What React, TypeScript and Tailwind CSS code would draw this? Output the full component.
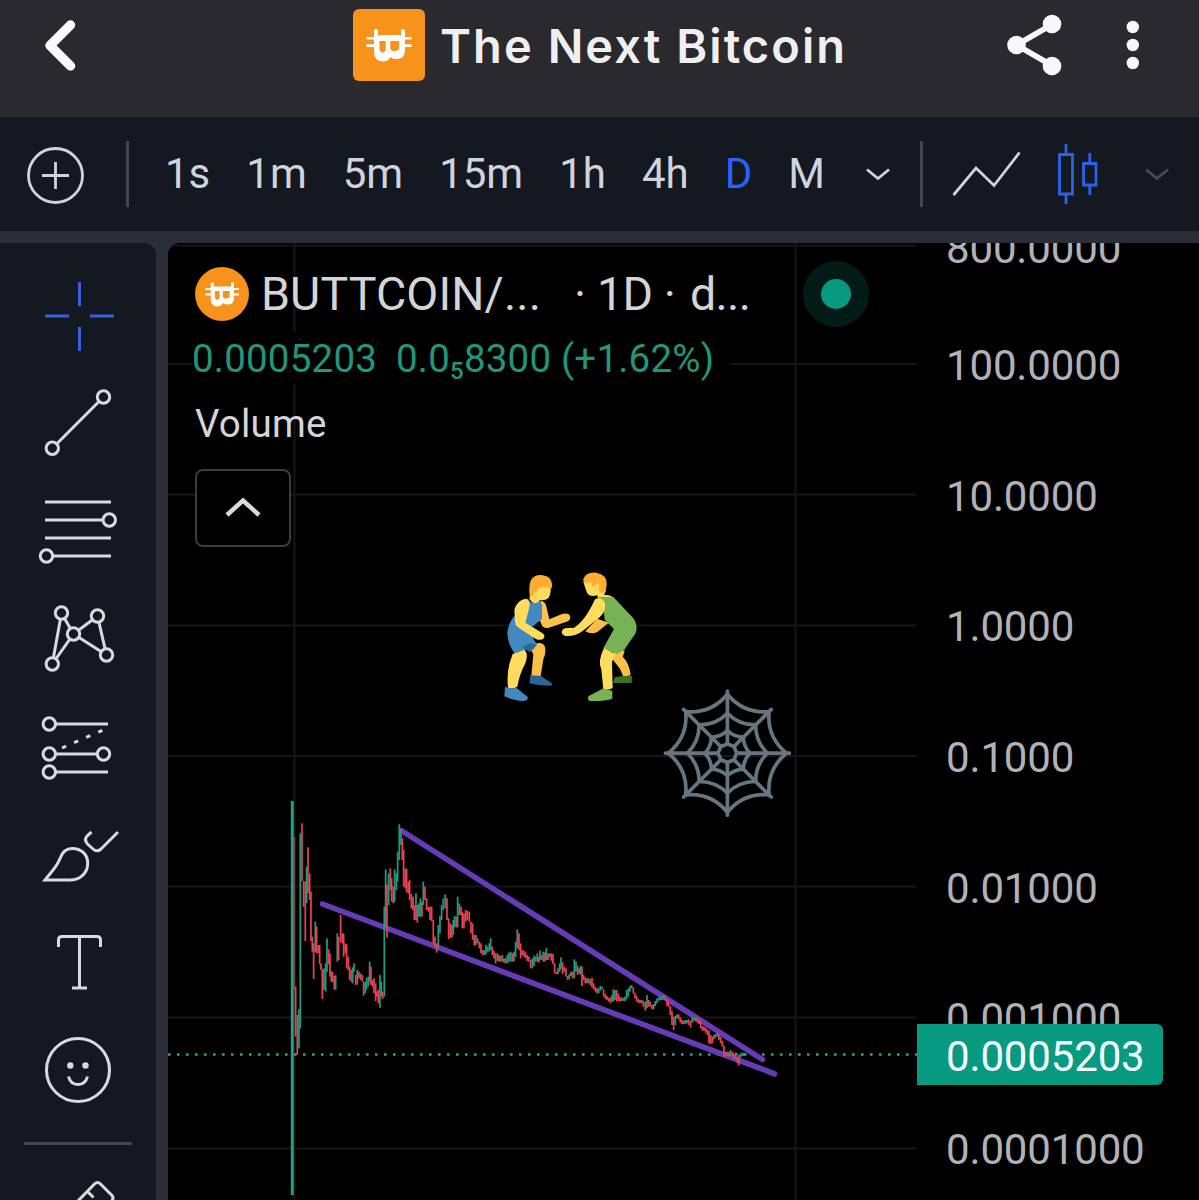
import type { ReactNode } from "react";

const INTERVALS = ["1s", "1m", "5m", "15m", "1h", "4h", "D", "M"];

const AXIS_LABELS = ["100.0000", "10.0000", "1.0000", "0.1000", "0.01000", "0.001000", "0.0001000"];

const GRID_Y = [245.5, 364, 494.5, 625.5, 756, 886.5, 1017.5, 1148.5];
const GRID_X = [294.5, 795.5];

// [x, high, low], in thirds of a pixel
const CANDLES: [number, number, number][] = [
	[77, 590, 740], [82, 675, 795], [87, 657, 775], [91, 130, 715], [96, 100, 273], [101, 273, 350],
	[106, 275, 453], [110, 230, 340], [114, 172, 310], [119, 250, 330], [123, 305, 453], [127, 440, 485],
	[131, 460, 567], [136, 395, 487], [140, 410, 490], [145, 465, 490], [149, 465, 523], [153, 520, 540],
	[157, 538, 627], [162, 535, 600], [167, 520, 605], [171, 445, 545], [176, 478, 523], [180, 490, 560],
	[184, 543, 575], [188, 547, 577], [193, 558, 598], [197, 555, 600], [202, 430, 515], [206, 440, 510],
	[212, 375, 457], [217, 430, 460], [221, 430, 500], [226, 460, 490], [230, 463, 535], [235, 500, 540],
	[239, 530, 570], [244, 540, 575], [248, 532, 580], [252, 520, 545], [257, 555, 585], [262, 540, 583],
	[267, 545, 565], [272, 550, 570], [277, 555, 575], [281, 575, 617], [286, 575, 610], [290, 563, 598],
	[295, 560, 590], [299, 515, 575], [303, 530, 585], [308, 570, 590], [312, 565, 610], [317, 580, 633],
	[321, 605, 620], [325, 600, 640], [330, 555, 653], [334, 575, 620], [338, 605, 627], [343, 350, 620],
	[347, 238, 415], [351, 283, 443], [356, 250, 345], [361, 235, 300], [365, 265, 335], [370, 290, 340],
	[374, 238, 335], [379, 250, 300], [383, 185, 275], [388, 103, 210], [393, 115, 165], [397, 145, 210],
	[401, 180, 290], [406, 235, 295], [410, 237, 307], [415, 275, 310], [419, 270, 330], [424, 312, 355],
	[429, 320, 360], [433, 345, 390], [438, 310, 390], [442, 345, 398], [447, 340, 380], [451, 325, 380],
	[456, 335, 380], [460, 275, 345], [465, 290, 330], [470, 325, 360], [475, 350, 365], [480, 350, 390],
	[485, 350, 393], [490, 390, 460], [495, 440, 470], [500, 460, 488], [505, 405, 475], [510, 378, 430],
	[515, 345, 390], [520, 325, 360], [526, 313, 355], [531, 325, 390], [536, 385, 447], [541, 400, 443],
	[546, 405, 443], [550, 390, 435], [554, 378, 412], [559, 380, 412], [563, 320, 412], [568, 340, 375],
	[573, 350, 375], [577, 365, 415], [582, 370, 415], [587, 360, 395], [592, 362, 390], [598, 365, 395],
	[603, 395, 430], [608, 400, 450], [613, 435, 467], [618, 435, 465], [623, 445, 460], [628, 455, 475],
	[633, 460, 490], [638, 480, 495], [643, 480, 495], [648, 465, 493], [653, 470, 485], [658, 460, 485],
	[662, 445, 480], [667, 470, 495], [672, 483, 505], [677, 490, 520], [682, 490, 513], [687, 495, 515],
	[692, 498, 515], [697, 495, 515], [702, 505, 518], [707, 505, 520], [712, 495, 520], [717, 488, 515],
	[722, 485, 515], [727, 490, 515], [732, 485, 515], [737, 455, 500], [742, 418, 475], [747, 430, 480],
	[752, 460, 505], [757, 480, 495], [762, 483, 500], [767, 487, 505], [772, 495, 513], [777, 500, 515],
	[782, 510, 535], [787, 505, 535], [792, 497, 528], [797, 500, 515], [802, 490, 515], [807, 500, 518],
	[810, 482, 510], [815, 495, 510], [820, 485, 515], [825, 487, 515], [829, 473, 510], [834, 490, 510],
	[839, 490, 502], [844, 490, 512], [849, 492, 522], [854, 520, 550], [859, 545, 553], [864, 535, 552],
	[869, 520, 545], [873, 502, 538], [878, 517, 552], [883, 530, 545], [888, 535, 560], [893, 558, 570],
	[898, 552, 568], [903, 545, 558], [908, 545, 565], [913, 508, 565], [918, 515, 545], [923, 527, 555],
	[928, 535, 550], [932, 527, 555], [936, 530, 588], [941, 555, 570], [946, 562, 580], [951, 565, 580],
	[956, 565, 580], [961, 568, 585], [966, 563, 592], [971, 580, 598], [976, 590, 605], [981, 595, 610],
	[986, 595, 610], [991, 588, 602], [996, 590, 598], [1001, 598, 620], [1006, 612, 627], [1011, 618, 630],
	[1016, 623, 635], [1021, 623, 640], [1026, 615, 635], [1030, 598, 635], [1035, 600, 630], [1040, 600, 635],
	[1045, 610, 633], [1050, 620, 635], [1055, 623, 633], [1060, 623, 633], [1065, 620, 633], [1070, 600, 628],
	[1075, 595, 620], [1080, 588, 605], [1085, 585, 595], [1090, 592, 610], [1095, 608, 625], [1100, 618, 635],
	[1105, 627, 638], [1110, 630, 640], [1115, 630, 640], [1120, 633, 650], [1126, 635, 662], [1131, 615, 655],
	[1136, 630, 650], [1141, 635, 650], [1146, 645, 658], [1151, 642, 658], [1156, 633, 648], [1161, 625, 640],
	[1166, 622, 632], [1171, 620, 630], [1176, 618, 630], [1181, 615, 626], [1186, 617, 630], [1191, 627, 648],
	[1196, 635, 650], [1201, 648, 675], [1206, 663, 705], [1211, 680, 720], [1216, 678, 705], [1221, 673, 685],
	[1226, 673, 688], [1231, 682, 698], [1236, 690, 703], [1241, 692, 702], [1246, 690, 702], [1251, 690, 700],
	[1256, 688, 705], [1262, 692, 713], [1267, 680, 698], [1272, 682, 692], [1277, 683, 695], [1282, 682, 698],
	[1287, 688, 702], [1292, 692, 715], [1297, 708, 722], [1302, 710, 722], [1307, 713, 728], [1312, 718, 735],
	[1317, 722, 760], [1322, 735, 762], [1327, 740, 760], [1332, 735, 748], [1337, 732, 742], [1342, 728, 740],
	[1347, 733, 750], [1352, 740, 760], [1357, 752, 770], [1362, 767, 800], [1367, 785, 800], [1372, 785, 798],
	[1377, 785, 800], [1382, 780, 798], [1387, 785, 800], [1392, 790, 810], [1397, 788, 805], [1402, 800, 820],
	[1407, 795, 827], [1412, 790, 802], [1417, 788, 798], [1422, 788, 798],
];

const GAP_DOWN = new Set([77, 96, 114, 140, 212, 262, 303, 361, 465, 573, 587, 592]);

function CoinMark() {
	return (
		<g fill="#fff">
			<path
				fillRule="evenodd"
				d="M21 20.500h4V26h23v-5.500h4v21q0 8.500-8.500 8.500-4 0-6-2-2.500 4.500-8 4.500-8.500-.500-8.500-10zM26.500 32v7.500q0 4 3 4 3.200 0 3.200-4V32zM37.200 32v6.500q0 3.500 4 3.500 5 0 5-4V32z"
			/>
			<path d="M13.500 28h8v2.600h-8zM13.500 35.300h8v2.600h-8zM51 28h7.500v2.600H51zM51 35.300h7.500v2.600H51z" />
		</g>
	);
}

function Header() {
	return (
		<header className="flex h-[117px] shrink-0 items-start bg-[#2a292e]">
			<svg className="h-[92px] w-[353px]" viewBox="0 0 353 92" fill="none">
				<path d="M70.500 25 50 45.500l20.500 20.500" stroke="#fafafc" strokeWidth="9.500" strokeLinecap="round" strokeLinejoin="round" />
			</svg>
			<svg className="mt-[9px] size-[72px] rounded-md bg-[#f7931a]" viewBox="0 0 72 72">
				<CoinMark />
			</svg>
			<h1 className="ml-[15px] w-[549px] whitespace-nowrap font-[Inter,sans-serif] text-[47px] leading-[92px] font-semibold tracking-[2.05px] text-[#efeff0]">
				The Next Bitcoin
			</h1>
			<svg className="h-[92px] w-[190px]" viewBox="989 0 190 92" fill="#f8f8fb">
				<path d="M1052 24.500 1016.500 45l35.500 20.500" fill="none" stroke="#f8f8fb" strokeWidth="5.500" />
				<circle cx="1052" cy="24" r="9.300" />
				<circle cx="1016.500" cy="45" r="9.300" />
				<circle cx="1052" cy="66" r="9.300" />
				<circle cx="1132.800" cy="27" r="6.200" />
				<circle cx="1132.800" cy="45" r="6.200" />
				<circle cx="1132.800" cy="63" r="6.200" />
			</svg>
		</header>
	);
}

function Toolbar() {
	return (
		<div className="flex h-[114px] shrink-0 items-center bg-[#141821] text-[#d1d4dc]">
			<svg className="mt-0.5 ml-[27px] size-[57px]" viewBox="0 0 57 57" fill="none" stroke="currentColor" strokeWidth="2.800">
				<circle cx="28.500" cy="28.500" r="27" />
				<path d="M15 28.500h27M28.500 15v27" />
			</svg>
			<div className="ml-[42px] h-[66px] w-[3px] bg-[#434651]" />
			<div className="ml-9 flex gap-9 text-[42px] leading-[60px]">
				{INTERVALS.map((interval) => (
					<span key={interval} className={interval === "D" ? "text-[#2962ff]" : ""}>
						{interval}
					</span>
				))}
			</div>
			<svg className="ml-auto h-[114px] w-[339px] shrink-0" viewBox="860 117 339 114" fill="none" strokeWidth="2.800">
				<path d="m867 169.500 11 9 11-9" stroke="#d1d4dc" />
				<path d="M921.500 141v66" stroke="#434651" strokeWidth="3" />
				<path d="m953.500 195 22.500-27 18 17.500 25.500-33" stroke="#d1d4dc" />
				<g stroke="#2d62e8">
					<path d="M1059.500 154.500h13v39.500h-13zM1066 144v10M1066 194v10" />
					<path d="M1083.500 163.500h12.500v21.500h-12.500zM1089.800 153v10M1089.800 185v10" />
				</g>
				<path d="m1146 169.500 11 9 11-9" stroke="#4a4c55" />
			</svg>
		</div>
	);
}

function Tool({ children, active }: { children: ReactNode; active?: boolean }) {
	return (
		<svg
			className={active ? "size-[108px] shrink-0 text-[#3b5fe0]" : "size-[108px] shrink-0 text-[#d8dae2]"}
			viewBox="0 0 108 108"
			fill="none"
			stroke="currentColor"
			strokeWidth="3"
		>
			{children}
		</svg>
	);
}

function Node({ x, y }: { x: number; y: number }) {
	return <circle cx={x} cy={y} r="6.200" fill="#141821" />;
}

function DrawingTools() {
	return (
		<aside className="flex w-[156px] shrink-0 flex-col items-center overflow-hidden rounded-tr-xl bg-[#141821] pt-[19px]">
			<Tool active>
				<path d="M55.500 20v24M55.500 65v24M21 54h24M66 54h24" />
			</Tool>
			<Tool>
				<path d="M28.300 78.300 79.500 27" />
				<Node x={28.3} y={78.3} />
				<Node x={79.5} y={27} />
			</Tool>
			<Tool>
				<path d="M21 24h66M21 42h64M21 60h66M22 78h65" />
				<Node x={85.3} y={42} />
				<Node x={22.5} y={78} />
			</Tool>
			<Tool>
				<path d="M28.300 78 37.500 27l12 21L73.500 30l9 39-33-21z" />
				<Node x={37.5} y={27} />
				<Node x={73.5} y={30} />
				<Node x={49.5} y={48} />
				<Node x={82.5} y={69} />
				<Node x={28.3} y={78} />
			</Tool>
			<Tool>
				<path d="M25 30h59M25 60h54M25 78h59" />
				<path d="m38 54 41-18" strokeDasharray="4.500 8.700" />
				<Node x={25.3} y={30} />
				<Node x={25.3} y={60} />
				<Node x={79.5} y={60} />
				<Node x={25.3} y={78} />
			</Tool>
			<Tool>
				<path d="M21 78h25c10 0 17.700-7 17.700-16.500S57 46.500 48 46.500c-7 0-10 4.500-12 10C33 65 27 70 21 78z" />
				<path d="m67.500 30-4 3.500q-4 4 0 8.500l5.500 5q4 3.500 8 0l17-17" />
			</Tool>
			<Tool>
				<path d="M34.500 37v-7q0-3.500 3.500-3.500h35q3.500 0 3.500 3.500v7M55.500 26.500V78M48 78h15" />
			</Tool>
			<Tool>
				<circle cx="54" cy="52" r="31.500" />
				<circle cx="46.300" cy="47.500" r="3.200" fill="currentColor" stroke="none" />
				<circle cx="61.500" cy="47.500" r="3.200" fill="currentColor" stroke="none" />
				<path d="M44.500 58.500q2 8 9.500 8t9.500-8" />
			</Tool>
			<div className="mt-4 h-[3px] w-[108px] shrink-0 bg-[#434651]" />
			<Tool>
				<path d="M50 60 70.500 39q3-3 6 0L88 50.500q2 2.500 0 5L70 74M63.500 46.500l6 6M54 56l6 6" />
			</Tool>
		</aside>
	);
}

function Wrestlers() {
	return (
		<g transform="translate(480 560) scale(.33333)">
			{/* left */}
			<path fill="#fcc24c" d="M182 122q16 2 18 22l8 34 38-16q14-4 22 2 8 10-4 20l-60 20q-14 2-18-8l-10-22z" />
			<path fill="#fbbf49" d="M148 262q34-24 46-4 6 16-4 40l-8 50h-28l6-66z" />
			<path fill="#ffdc5d" d="M149 86 212 76q2 36-12 42-10 4-20 2v14q-20 2-31-16z" />
			<path fill="#ffac33" d="M149 98q-6-52 32-53 36 2 35 33 0 6-4 10-12-12-30-6-10 4-12 16-8-4-8 6l-6 8q-6-4-7-14z" />
			<path fill="#4289c1" d="m116 140 28-25q8 22 30 12l4-8 8 16v42l-30 24 2 24q0 14 14 28l-12 16-20-4-6 8-10 6-10-3-8 7q-28-38-23-72 6-32 26-48z" />
			<path fill="#2a6797" d="m126 262 26-13 16 6-18 22z" />
			<path fill="#ffdc5d" d="M103 150q8-30 34-34 18 6 9 34l-10 38 52 32q8 6 4 14-8 10-26 2l-52-34q-10-8-9-20zM98 282l36-12q12 12 2 40-18 34-24 70-12 8-28 4-6-54 14-102z" />
			<path fill="#4289c1" d="M75 380q20 8 34 3l34 28q2 12-16 12-22 0-54-14z" />
			<path fill="#2a6797" d="m151 346 32 2 32 22q4 6-2 7-40 0-65-8z" />
			{/* right */}
			<path fill="#fbbf49" d="m352 176 34 12-34 28q-18 8-36-2zM388 286l32-20 14 8-6 16q20 18 24 56l-22 4-10-24z" />
			<path fill="#3e721d" d="m404 352 24-4h28l-1 21h-56zM424 266l26-30-18 38z" />
			<path fill="#ffdc5d" d="m310 66 56-8 12 34-6 12q18 0 30 10l-48 6-2-14q-26 6-32-10z" />
			<path fill="#ffac33" d="M309 59q8-24 40-21 32 6 31 34 0 22-14 28-8-2-10-12 4-16-4-18-10 2-8 14-12-8-10-18l-20 4z" />
			<path fill="#77b255" d="M354 111h46l60 64q16 22 6 46l-32 46-22 16-42-18 32-58-28-28-4-42z" />
			<path fill="#ffdc5d" d="M345 118q20-10 30 12 4 24-16 42l-52 42q-20 16-52 14-16-8-6-20 8-6 32-4 34-20 64-86zM372 264l34 18-10 24 2 78q-12 8-28 4l-6-60q-12-24 8-64z" />
			<path fill="#77b255" d="m368 386 29 6v24q-22 8-66 7-10-2-6-14z" />
		</g>
	);
}

function SpiderWeb() {
	const point = (r: number, step: number) => {
		const a = (step * Math.PI) / 8;
		return `${(727.4 + r * Math.cos(a)).toFixed(1)} ${(753.2 + r * Math.sin(a)).toFixed(1)}`;
	};
	const ring = (r: number, dip: number) =>
		`M${point(r, 0)}` + [2, 4, 6, 8, 10, 12, 14, 16].map((s) => `Q${point(r * dip, s - 1)} ${point(r, s)}`).join("");
	const spokes = [0, 2, 4, 6, 8, 10, 12, 14].map((s) => `M${point(9, s)}L${point(62, s)}`).join("");
	return (
		<g fill="none" stroke="#66757f" strokeWidth="3.700" strokeLinecap="round">
			<path d={spokes} />
			<path d={ring(59, 0.72)} />
			<path d={ring(40, 0.76)} />
			<path d={ring(22.5, 0.78)} />
			<path d={ring(9.5, 0.88)} />
		</g>
	);
}

function Plot() {
	return (
		<svg className="h-[957px] w-[749px] shrink-0" viewBox="168 243 749 957">
			<g stroke="#161618" strokeWidth="2">
				{GRID_Y.map((y) => (
					<path key={y} d={`M168 ${y}h749`} />
				))}
				{GRID_X.map((x) => (
					<path key={x} d={`M${x} 243v957`} />
				))}
			</g>
			<path d="M168 1054.500h749" stroke="#35a085" strokeWidth="2.600" strokeDasharray="2.600 6.400" />
			<g stroke="#673ab7" strokeWidth="5.600" strokeLinecap="round">
				<path d="m402 831 360.500 228.500" />
				<path d="m322.500 904 452 169.800" />
			</g>
			<path d="M294.500 837v153" stroke="#8a3d42" strokeWidth="1.300" />
			<path d="M292.300 801v394" stroke="#22a083" strokeWidth="3" />
			<g transform="translate(270 790) scale(.33333)">
				{CANDLES.map(([x, high, low], i) => {
					const prev = CANDLES[i - 1] ?? [0, 0, 0];
					const falling = high + low > prev[1] + prev[2] || GAP_DOWN.has(x);
					return (
						<rect key={x} x={x - 2.7} y={high} width={5.2} height={low - high} fill={falling ? "#e8414f" : "#1e9c82"} />
					);
				})}
			</g>
			<Wrestlers />
			<SpiderWeb />
		</svg>
	);
}

function Legend() {
	return (
		<div className="absolute top-6 left-6 flex flex-col items-start whitespace-nowrap text-[#d5d5d8]">
			<div className="ml-[3px] flex h-[54px] items-center text-[46.5px]">
				<svg className="mr-3 size-[54px] rounded-full bg-[#f7931a]" viewBox="0 0 72 72">
					<CoinMark />
				</svg>
				<span className="mt-0.5 w-[313px] tracking-[0.15px]">BUTTCOIN/...</span>
				<span className="mt-0.5 w-[116px] tracking-[-0.4px]">· 1D ·</span>
				<span className="mt-0.5 tracking-[-0.7px]">d...</span>
				<span className="absolute left-[611px] flex size-[66px] items-center justify-center rounded-full bg-[#031b17]">
					<span className="size-[30px] rounded-full bg-[#089981]" />
				</span>
			</div>
			<div className="mt-3 flex h-[52px] items-center bg-black pr-4 text-[38.5px] tracking-[0.2px] text-[#20967c]">
				<span className="w-[204px]">0.0005203</span>
				<span>
					0.0<span className="relative top-[7px] text-[24px] font-medium">5</span>8300 (+1.62%)
				</span>
			</div>
			<div className="mt-3 ml-[3px] flex h-[54px] items-center text-[38.5px] tracking-[0.2px]">Volume</div>
			<div className="mt-[18px] ml-[3px] flex h-[78px] w-24 items-center justify-center rounded-lg border-[2.5px] border-[#3d3d40] bg-black">
				<svg className="h-[24px] w-[40px]" viewBox="0 0 40 24" fill="none">
					<path d="M4 19 20 4.500 36 19" stroke="#dbdbdb" strokeWidth="4.500" />
				</svg>
			</div>
		</div>
	);
}

function PriceScale() {
	return (
		<div className="relative flex flex-1 flex-col pl-[29px] text-[42px] tracking-[-0.15px] text-[#b2b2b6]">
			<div className="h-[57px] shrink-0">
				<div className="-mt-[18px] leading-[48px]">800.0000</div>
			</div>
			{AXIS_LABELS.map((label) => (
				<div key={label} className="flex h-[130.7px] shrink-0 items-center">
					{label}
				</div>
			))}
			<div className="absolute top-[781px] left-0 flex h-[61px] w-[246px] items-center rounded-r-md bg-[#089981] pt-1 pl-[29px] text-[#f4fffd]">
				0.0005203
			</div>
		</div>
	);
}

export default function App() {
	return (
		<div className="flex h-[1200px] w-[1199px] flex-col overflow-hidden bg-[#2a2e39] font-[Roboto,sans-serif]">
			<Header />
			<Toolbar />
			<main className="mt-3 flex h-[957px] shrink-0 gap-3">
				<DrawingTools />
				<section className="relative flex flex-1 overflow-hidden rounded-tl-xl bg-black">
					<Plot />
					<PriceScale />
					<Legend />
				</section>
			</main>
		</div>
	);
}
